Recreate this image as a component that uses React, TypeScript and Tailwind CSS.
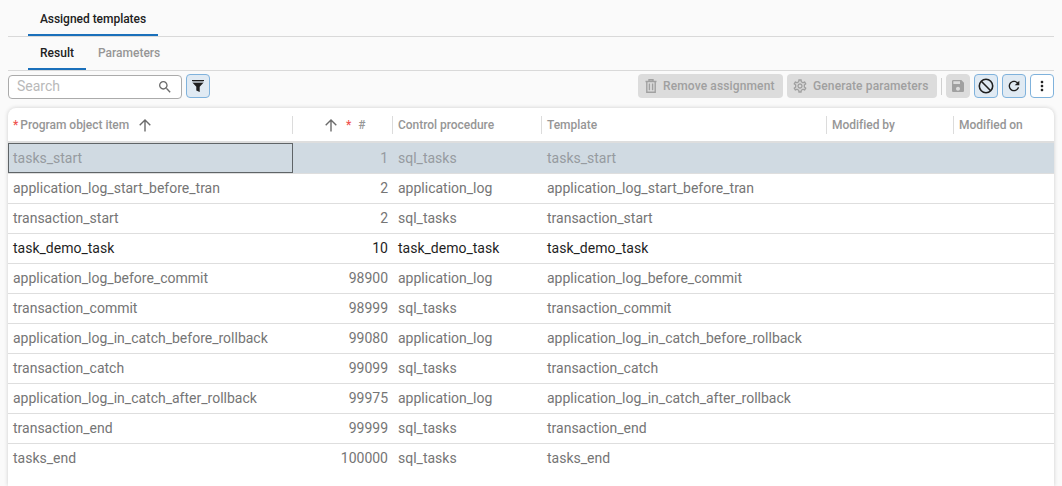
import type { ReactNode } from "react";

type Row = {
  item: string;
  order: number;
  procedure: string;
  active?: boolean;
};

const rows: Row[] = [
  { item: "tasks_start", order: 1, procedure: "sql_tasks" },
  { item: "application_log_start_before_tran", order: 2, procedure: "application_log" },
  { item: "transaction_start", order: 2, procedure: "sql_tasks" },
  { item: "task_demo_task", order: 10, procedure: "task_demo_task", active: true },
  { item: "application_log_before_commit", order: 98900, procedure: "application_log" },
  { item: "transaction_commit", order: 98999, procedure: "sql_tasks" },
  { item: "application_log_in_catch_before_rollback", order: 99080, procedure: "application_log" },
  { item: "transaction_catch", order: 99099, procedure: "sql_tasks" },
  { item: "application_log_in_catch_after_rollback", order: 99975, procedure: "application_log" },
  { item: "transaction_end", order: 99999, procedure: "sql_tasks" },
  { item: "tasks_end", order: 100000, procedure: "sql_tasks" },
];

const columns = "grid grid-cols-[285px_100px_149px_285px_127px_100px]";

function Icon({ d, className }: { d: string; className: string }) {
  return (
    <svg viewBox="0 0 24 24" fill="currentColor" className={`shrink-0 ${className}`}>
      <path d={d} />
    </svg>
  );
}

function SortArrow({ className }: { className: string }) {
  return (
    <svg viewBox="0 0 12 13" fill="none" stroke="#6b6b6b" strokeWidth="1.4" className={`h-[13px] w-3 shrink-0 ${className}`}>
      <path d="M6 12.5V1.2M0.7 6.3L6 1l5.3 5.3" />
    </svg>
  );
}

function IconButton({ children, className }: { children: ReactNode; className: string }) {
  return (
    <button className={`flex h-6 w-6 shrink-0 items-center justify-center rounded border ${className}`}>
      {children}
    </button>
  );
}

function HeaderCell({ children, last }: { children: ReactNode; last?: boolean }) {
  return (
    <div className={`flex h-[18px] items-center pl-[5px] ${last ? "" : "border-r border-[#dcdcdc]"}`}>
      {children}
    </div>
  );
}

function Toolbar() {
  return (
    <div className="flex h-[37px] items-start pt-[3px]">
      <div className="mt-px flex h-6 w-[174px] items-center rounded border border-[#ababab] bg-white pl-2 pr-2">
        <input
          placeholder="Search"
          className="w-0 flex-1 pb-0.5 text-sm outline-none placeholder:text-[#b9b9b9]"
        />
        <Icon
          className="h-4 w-4 text-[#6b6b6b]"
          d="M15.5 14h-.79l-.28-.27C15.41 12.59 16 11.11 16 9.5 16 5.91 13.09 3 9.5 3S3 5.91 3 9.5 5.91 16 9.5 16c1.61 0 3.09-.59 4.23-1.57l.27.28v.79l5 4.99L20.49 19l-4.99-5zm-6 0C7.01 14 5 11.99 5 9.5S7.01 5 9.5 5 14 7.01 14 9.5 11.99 14 9.5 14z"
        />
      </div>
      <IconButton className="ml-1 border-[#7fb2dc] bg-[#e0eaf3]">
        <svg viewBox="0 0 12 12" className="h-3 w-3" fill="#1f1f1f">
          <path d="M0 0h12v1H0z" />
          <path d="M0.5 1h11v2h-11z" fillOpacity="0.35" />
          <path d="M0.8 3h10.4L7.7 6.8V12L4.3 10.6V6.8z" />
        </svg>
      </IconButton>

      <div className="ml-auto flex items-center gap-1 text-xs font-medium text-[#a0a0a0]">
        <button className="flex h-6 w-[145px] items-center rounded bg-[#dcdcdc] pl-[7px] tracking-[0.13px]">
          <svg viewBox="0 0 12 14" className="mr-[6px] h-[14px] w-3 shrink-0" fill="none" stroke="currentColor">
            <path strokeWidth="1.4" d="M0.5 2.5h11M1.8 2.5v10.7h8.4V2.5M4 2V0.8h4V2M4.4 4.5v6.7M7.6 4.5v6.7" />
          </svg>
          Remove assignment
        </button>
        <button className="flex h-6 w-[150px] items-center rounded bg-[#dcdcdc] pl-[5px] tracking-[0.13px]">
          <Icon
            className="mr-[5px] h-4 w-4"
            d="M19.43 12.98c.04-.32.07-.64.07-.98 0-.34-.03-.66-.07-.98l2.11-1.65c.19-.15.24-.42.12-.64l-2-3.46c-.09-.16-.26-.25-.44-.25-.06 0-.12.01-.17.03l-2.49 1c-.52-.4-1.08-.73-1.69-.98l-.38-2.65C14.46 2.18 14.25 2 14 2h-4c-.25 0-.46.18-.49.42l-.38 2.65c-.61.25-1.17.59-1.69.98l-2.49-1c-.06-.02-.12-.03-.18-.03-.17 0-.34.09-.43.25l-2 3.46c-.13.22-.07.49.12.64l2.11 1.65c-.04.32-.07.65-.07.98 0 .33.03.66.07.98l-2.11 1.65c-.19.15-.24.42-.12.64l2 3.46c.09.16.26.25.44.25.06 0 .12-.01.17-.03l2.49-1c.52.4 1.08.73 1.69.98l.38 2.65c.03.24.24.42.49.42h4c.25 0 .46-.18.49-.42l.38-2.65c.61-.25 1.17-.59 1.69-.98l2.49 1c.06.02.12.03.18.03.17 0 .34-.09.43-.25l2-3.46c.12-.22.07-.49-.12-.64l-2.11-1.65zm-1.98-1.71c.04.31.05.52.05.73 0 .21-.02.43-.05.73l-.14 1.13.89.7 1.08.84-.7 1.21-1.27-.51-1.04-.42-.9.68c-.43.32-.84.56-1.25.73l-1.06.43-.16 1.13-.2 1.35h-1.4l-.19-1.35-.16-1.13-1.06-.43c-.43-.18-.83-.41-1.23-.71l-.91-.7-1.06.43-1.27.51-.7-1.21 1.08-.84.89-.7-.14-1.13c-.03-.31-.05-.54-.05-.74s.02-.43.05-.73l.14-1.13-.89-.7-1.08-.84.7-1.21 1.27.51 1.04.42.9-.68c.43-.32.84-.56 1.25-.73l1.06-.43.16-1.13.2-1.35h1.39l.19 1.35.16 1.13 1.06.43c.43.18.83.41 1.23.71l.91.7 1.06-.43 1.27-.51.7 1.21-1.07.85-.89.7.14 1.13zM12 8c-2.21 0-4 1.79-4 4s1.79 4 4 4 4-1.79 4-4-1.79-4-4-4zm0 6c-1.1 0-2-.9-2-2s.9-2 2-2 2 .9 2 2-.9 2-2 2z"
          />
          Generate parameters
        </button>
        <div className="h-[17px] w-px bg-[#d0d0d0]" />
        <IconButton className="border-[#dcdcdc] bg-[#dcdcdc]">
          <Icon
            className="h-4 w-4"
            d="M17 3H5c-1.11 0-2 .9-2 2v14c0 1.1.89 2 2 2h14c1.1 0 2-.9 2-2V7l-4-4zm-5 16c-1.66 0-3-1.34-3-3s1.34-3 3-3 3 1.34 3 3-1.34 3-3 3zm3-10H5V5h10v4z"
          />
        </IconButton>
        <IconButton className="border-[#7fb2dc] bg-[#e0eaf3] text-[#1f1f1f]">
          <svg viewBox="0 0 16 16" className="h-4 w-4 shrink-0" fill="none" stroke="currentColor" strokeWidth="1.6">
            <circle cx="8" cy="8" r="6.7" />
            <path d="M3.3 3.3l9.4 9.4" />
          </svg>
        </IconButton>
        <IconButton className="border-[#7fb2dc] bg-[#e0eaf3] text-[#1f1f1f]">
          <Icon
            className="h-4 w-4"
            d="M17.65 6.35C16.2 4.9 14.21 4 12 4c-4.42 0-7.99 3.58-7.99 8s3.57 8 7.99 8c3.73 0 6.84-2.55 7.73-6h-2.08c-.82 2.33-3.04 4-5.65 4-3.31 0-6-2.69-6-6s2.69-6 6-6c1.66 0 3.14.69 4.22 1.78L13 11h7V4l-2.35 2.35z"
          />
        </IconButton>
        <IconButton className="border-[#7fb2dc] bg-white text-[#1f1f1f]">
          <Icon
            className="h-4 w-4"
            d="M12 8c1.1 0 2-.9 2-2s-.9-2-2-2-2 .9-2 2 .9 2 2 2zm0 2c-1.1 0-2 .9-2 2s.9 2 2 2 2-.9 2-2-.9-2-2-2zm0 6c-1.1 0-2 .9-2 2s.9 2 2 2 2-.9 2-2-.9-2-2-2z"
          />
        </IconButton>
      </div>
    </div>
  );
}

export default function App() {
  return (
    <div className="flex h-[486px] w-[1062px] flex-col overflow-hidden bg-[#fafafa] px-2 font-['Roboto',sans-serif]">
      <nav className="flex h-[37px] items-end border-b border-[#d9d9d9] pl-5 text-xs font-medium">
        <button className="h-9 w-[130px] whitespace-nowrap border-b-2 border-[#1a70bb] pt-1 text-center tracking-[-0.03px] text-[#212121]">
          Assigned templates
        </button>
      </nav>
      <nav className="flex h-[34px] items-end border-b border-[#d9d9d9] pl-5 text-xs font-medium">
        <button className="h-[33px] w-[58px] border-b-2 border-[#1a70bb] text-center text-[#212121]">Result</button>
        <button className="h-[33px] border-b-2 border-transparent px-3 text-[#969696]">Parameters</button>
      </nav>
      <Toolbar />

      <div className="flex-1 overflow-visible rounded-t-lg bg-white shadow-[0_0_4px_rgba(0,0,0,0.18)]">
        <div className={`${columns} h-[35px] items-center border-b-2 border-[#dedede] pt-px text-xs font-medium tracking-[-0.03px] text-[#969696]`}>
          <HeaderCell>
            <span className="mr-[2px] text-[#ef5350]">*</span>
            Program object item
            <SortArrow className="ml-[10px]" />
          </HeaderCell>
          <HeaderCell>
            <SortArrow className="ml-[27px]" />
            <span className="ml-[9px] mr-[7px] text-[#ef5350]">*</span>
            #
          </HeaderCell>
          <HeaderCell>Control procedure</HeaderCell>
          <HeaderCell>Template</HeaderCell>
          <HeaderCell>Modified by</HeaderCell>
          <HeaderCell last>Modified on</HeaderCell>
        </div>

        {rows.map((row, index) => {
          const selected = index === 0;
          const tone = selected ? "text-[#969ba0]" : row.active ? "text-[#1f1f1f]" : "text-[#757575]";
          return (
            <div
              key={row.item}
              className={`${columns} text-sm ${tone} ${selected ? "h-[31px] bg-[#d0dae2]" : "h-[30px] pb-0.5"} ${
                index < rows.length - 1 ? "border-b border-[#dedede]" : ""
              }`}
            >
              <div className={`flex items-center border ${selected ? "border-[#5f6467]" : "border-transparent"} pl-1`}>
                {row.item}
              </div>
              <div className="flex items-center justify-end pr-[5px]">{row.order}</div>
              <div className="flex items-center pl-[5px]">{row.procedure}</div>
              <div className="flex items-center pl-[5px]">{row.item}</div>
            </div>
          );
        })}
      </div>
    </div>
  );
}
